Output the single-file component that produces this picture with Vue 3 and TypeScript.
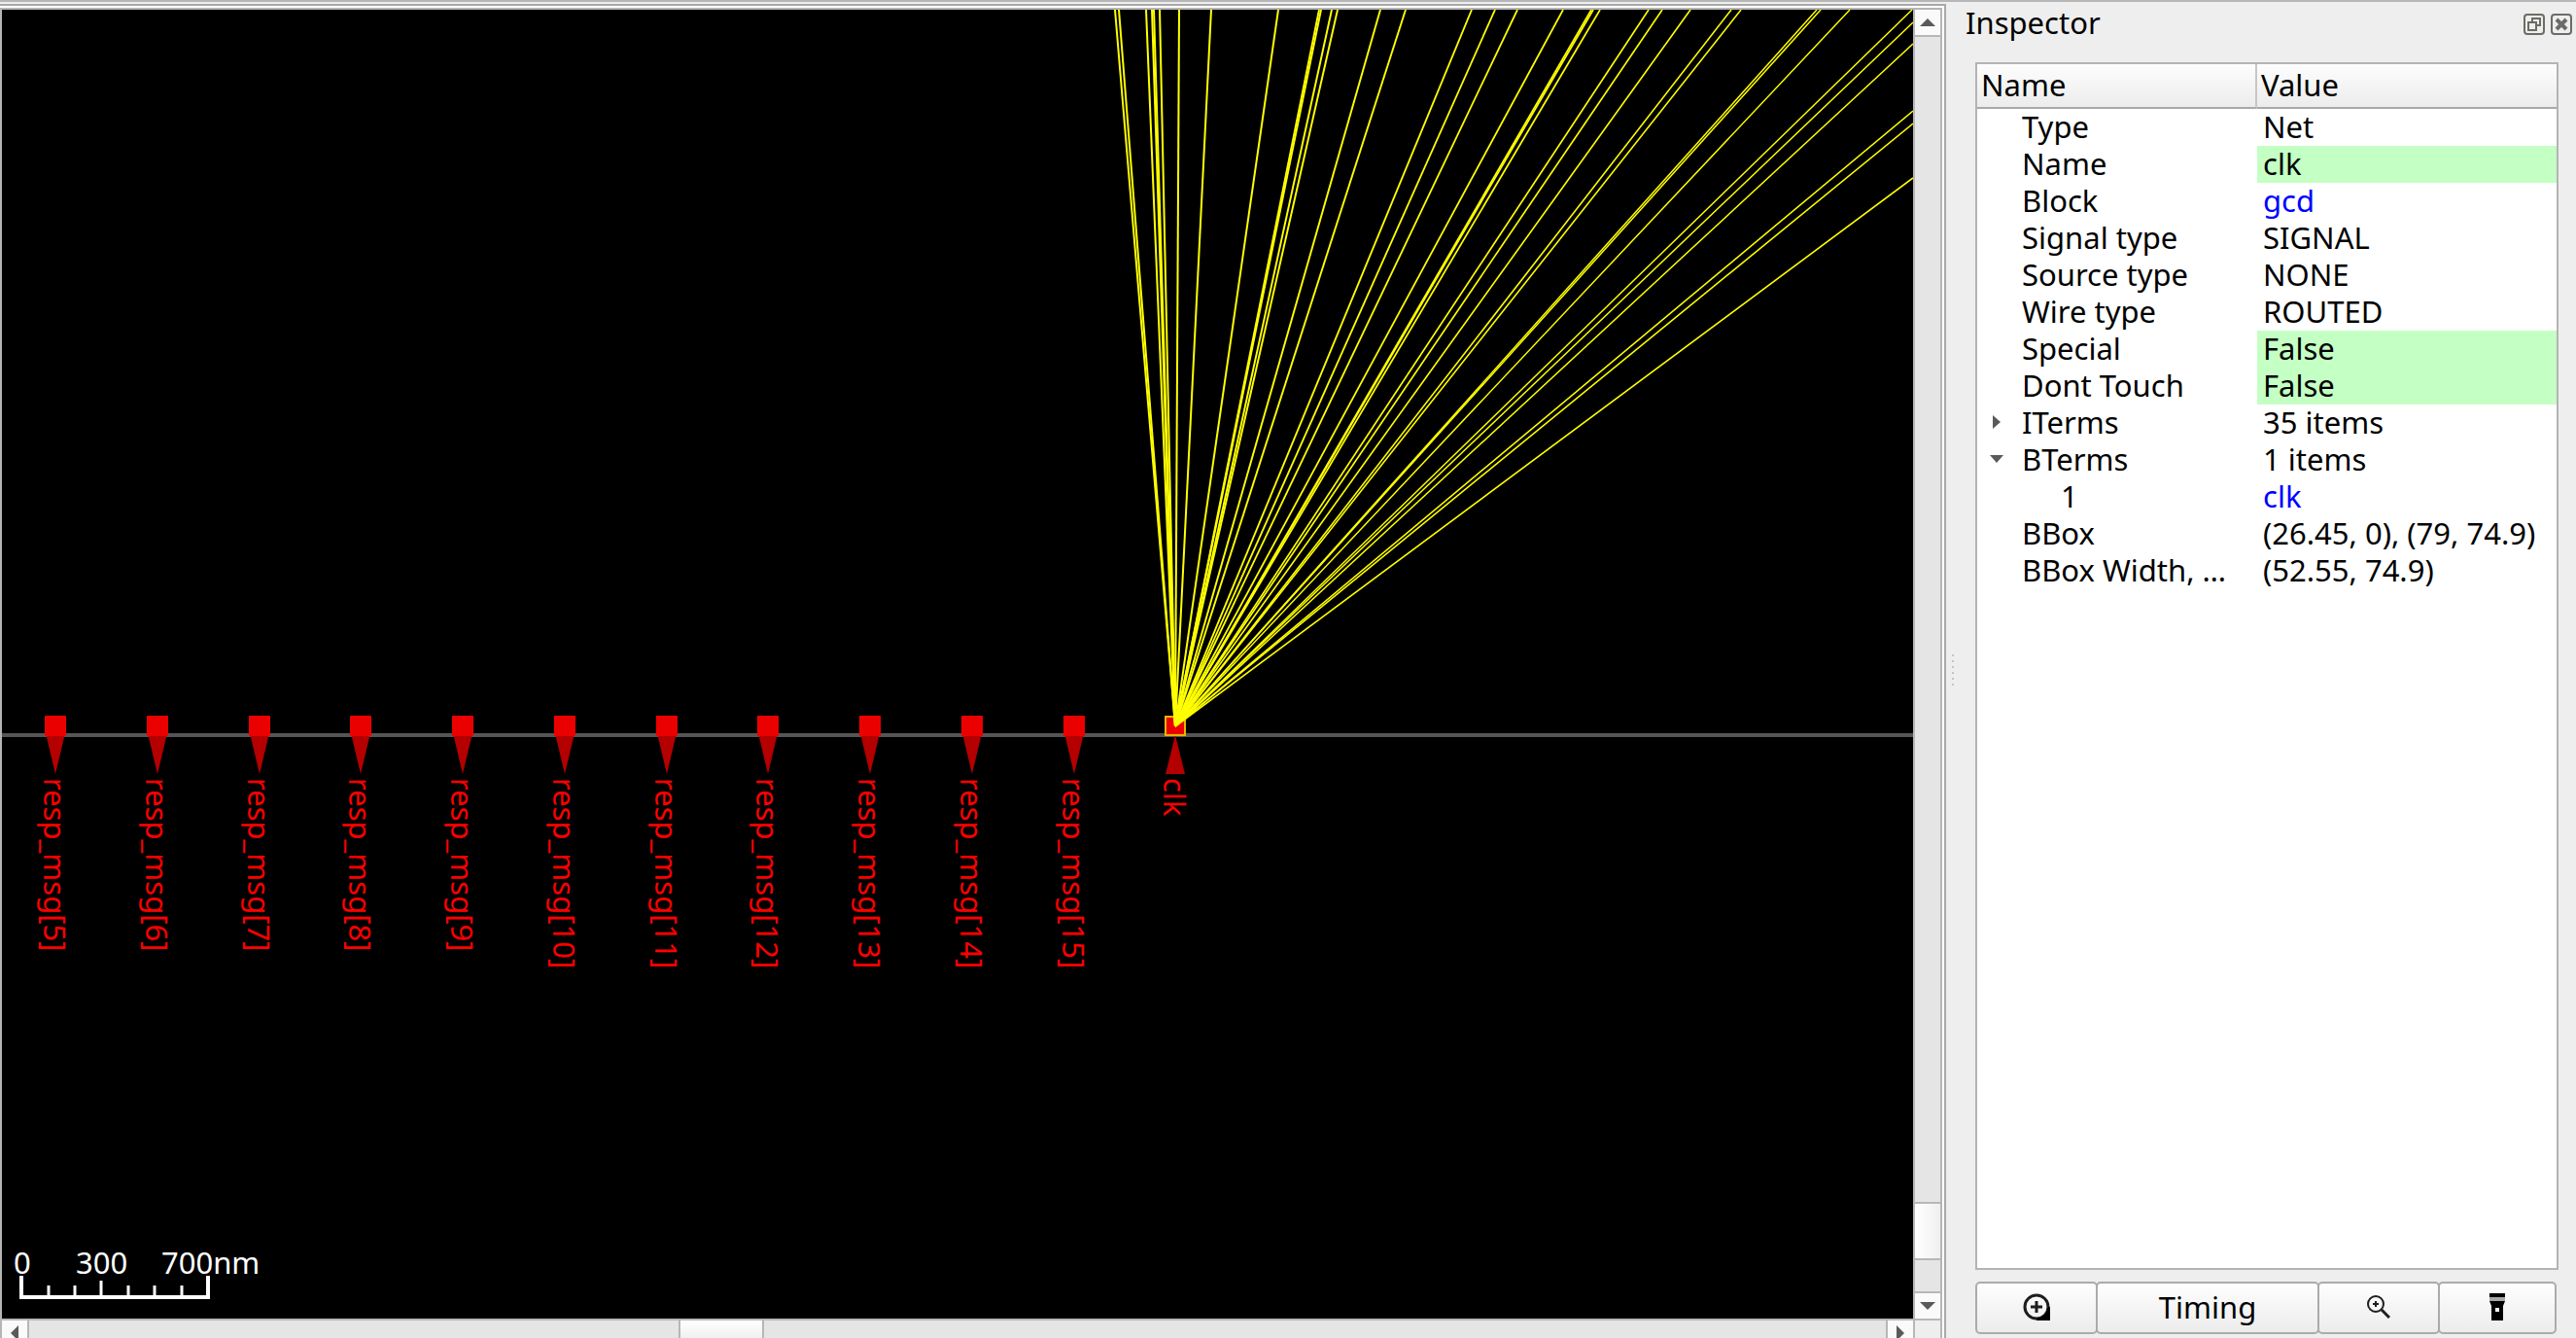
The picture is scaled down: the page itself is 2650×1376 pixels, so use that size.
<script setup lang="ts">
interface Point { x: number; y: number }
interface Pin { label: string; x: number }
interface Row {
  name: string
  value: string
  editable?: boolean
  link?: boolean
  child?: boolean
  state?: 'open' | 'closed'
}

const hub: Point = { x: 1207, y: 737 }
const edgeY = 746

// Flight lines of the selected net: where each leaves the view at the top or at the right.
const topEnds: number[] = [
  1145, 1149, 1177, 1183, 1185, 1191, 1211, 1244, 1313, 1355, 1357, 1368, 1374, 1418, 1444,
  1512, 1536, 1559, 1606, 1635, 1637, 1644, 1694, 1708, 1737, 1779, 1789, 1867, 1871, 1901, 1965,
]
const rightEnds: number[] = [13, 35, 104, 117, 173]
const flightLines: Point[] = [
  ...topEnds.map((x) => ({ x, y: 0 })),
  ...rightEnds.map((y) => ({ x: 1966, y })),
]

// Cosmetic pen: two pixels measured along the minor axis, so diagonals come out thinner.
function penWidth(end: Point): number {
  const dx = Math.abs(end.x - hub.x)
  const dy = Math.abs(end.y - hub.y)
  return (2 * Math.max(dx, dy)) / Math.hypot(dx, dy)
}

const pins: Pin[] = Array.from({ length: 11 }, (_, i) => ({
  label: `resp_msg[${i + 5}]`,
  x: Math.round(55 + i * 104.75),
}))

const ticks: number[] = [48, 75, 130, 157, 185]

const rows: Row[] = [
  { name: 'Type', value: 'Net' },
  { name: 'Name', value: 'clk', editable: true },
  { name: 'Block', value: 'gcd', link: true },
  { name: 'Signal type', value: 'SIGNAL' },
  { name: 'Source type', value: 'NONE' },
  { name: 'Wire type', value: 'ROUTED' },
  { name: 'Special', value: 'False', editable: true },
  { name: 'Dont Touch', value: 'False', editable: true },
  { name: 'ITerms', value: '35 items', state: 'closed' },
  { name: 'BTerms', value: '1 items', state: 'open' },
  { name: '1', value: 'clk', link: true, child: true },
  { name: 'BBox', value: '(26.45, 0), (79, 74.9)' },
  { name: 'BBox Width, …', value: '(52.55, 74.9)' },
]
</script>

<template>
  <div class="app">
    <main class="viewer">
      <div class="frame">
        <div class="canvas">
          <svg class="layout" role="img" aria-label="Layout view">
            <rect class="edge" x="0" :y="edgeY - 2" width="100%" height="4" />
            <g v-for="pin in pins" :key="pin.label" :transform="`translate(${pin.x} ${edgeY})`">
              <path class="marker" d="M-10 -2H10L0 40Z" />
              <rect class="pin" x="-11" y="-20" width="22" height="21" />
              <text transform="translate(-12 44) rotate(90)">{{ pin.label }}</text>
            </g>
            <g :transform="`translate(${hub.x} ${edgeY})`">
              <path class="marker" d="M0 0L10 40H-10Z" />
              <rect class="pin selected" x="-10" y="-19" width="20" height="19" />
              <text transform="translate(-12 44) rotate(90)">clk</text>
            </g>
            <line
              v-for="(end, i) in flightLines"
              :key="i"
              class="flight"
              :x1="hub.x"
              :y1="hub.y"
              :x2="end.x"
              :y2="end.y"
              :stroke-width="penWidth(end)"
            />
          </svg>
          <svg class="scale" width="300" height="80" aria-label="Scale">
            <text x="12" y="34">0</text>
            <text x="76" y="34">300</text>
            <text x="164" y="34">700nm</text>
            <path class="ruler" d="M20 36V58H212V36" />
            <path class="tick" d="M102 41V57" />
            <path v-for="x in ticks" :key="x" class="tick" :d="`M${x} 46V57`" />
          </svg>
        </div>
        <div class="vscroll">
          <button class="arrow" type="button" aria-label="Scroll up">
            <svg width="16" height="8"><path d="M8 0L16 8H0Z" /></svg>
          </button>
          <div class="track before"></div>
          <div class="thumb"></div>
          <div class="track after"></div>
          <button class="arrow" type="button" aria-label="Scroll down">
            <svg width="16" height="8"><path d="M0 0H16L8 8Z" /></svg>
          </button>
        </div>
        <div class="hscroll">
          <button class="arrow" type="button" aria-label="Scroll left">
            <svg width="8" height="16"><path d="M8 0V16L0 8Z" /></svg>
          </button>
          <div class="track before"></div>
          <div class="thumb"></div>
          <div class="track after"></div>
          <button class="arrow" type="button" aria-label="Scroll right">
            <svg width="8" height="16"><path d="M0 0V16L8 8Z" /></svg>
          </button>
        </div>
        <div class="corner"></div>
      </div>
    </main>

    <div class="splitter"></div>

    <aside class="dock">
      <header class="dock-title">
        <h1>Inspector</h1>
        <button class="dock-button" type="button" aria-label="Float">
          <svg width="22" height="22" viewBox="0 0 22 22">
            <rect x="1" y="1" width="20" height="20" rx="3" />
            <path d="M9 8V5H17V12H14M5 9H13V17H5Z" />
          </svg>
        </button>
        <button class="dock-button" type="button" aria-label="Close">
          <svg width="22" height="22" viewBox="0 0 22 22">
            <rect x="1" y="1" width="20" height="20" rx="3" />
            <path class="cross" d="M6 6L16 16M16 6L6 16" />
          </svg>
        </button>
      </header>

      <div class="tree">
        <table>
          <thead>
            <tr>
              <th scope="col" class="name">Name</th>
              <th scope="col">Value</th>
            </tr>
          </thead>
          <tbody>
            <tr v-for="(row, i) in rows" :key="i">
              <td class="name">
                <div class="cell" :class="{ child: row.child }">
                  <span class="branch">
                    <button v-if="row.state" type="button" :aria-label="`Toggle ${row.name}`">
                      <svg v-if="row.state === 'closed'" width="8" height="14"><path d="M0 0V14L8 7Z" /></svg>
                      <svg v-else width="14" height="8"><path d="M0 0H14L7 8Z" /></svg>
                    </button>
                  </span>
                  <span>{{ row.name }}</span>
                </div>
              </td>
              <td class="value" :class="{ editable: row.editable }">
                <a v-if="row.link" href="#">{{ row.value }}</a>
                <template v-else>{{ row.value }}</template>
              </td>
            </tr>
          </tbody>
        </table>
      </div>

      <div class="actions">
        <button class="focus" type="button" aria-label="Zoom to item">
          <svg width="28" height="28" viewBox="0 0 28 28">
            <path class="stroke3" d="M14 2A12 12 0 1 0 14 26A12 12 0 0 0 14 2Z" />
            <path class="solid" d="M28 14V28H14V26L20 24L24 20L26 14Z" />
            <path class="stroke3" d="M14 8V20M8 14H20" />
          </svg>
        </button>
        <button class="timing" type="button">Timing</button>
        <button class="zoom" type="button" aria-label="Zoom in">
          <svg width="24" height="24" viewBox="0 0 24 24">
            <circle class="stroke2" cx="9" cy="9" r="8" />
            <path class="stroke2" d="M9 6V12M6 9H12" />
            <path class="stroke3" d="M15 15L23 23" />
          </svg>
        </button>
        <button class="highlight" type="button" aria-label="Highlight">
          <svg width="16" height="28" viewBox="0 0 16 28">
            <path class="solid" d="M0 0H16V4H0Z" />
            <path class="lens" d="M0 4H16V8H0Z" />
            <path class="solid" fill-rule="evenodd" d="M0 8H16L14 13V28H2V13ZM6 15V19H10V15Z" />
          </svg>
        </button>
      </div>
    </aside>
  </div>
</template>

<style>
html,
body {
  margin: 0;
  background: #eeeeee;
}
</style>

<style scoped>
.app {
  box-sizing: border-box;
  display: flex;
  height: 100vh;
  overflow: hidden;
  border-top: 2px solid #b6b6b6;
  padding-top: 2px;
  background: #eeeeee;
  color: #000000;
  font-family: "Noto Sans", "Open Sans", sans-serif;
  font-size: 31px;
}

button {
  box-sizing: border-box;
  margin: 0;
  padding: 0;
  border: 0;
  background: none;
  color: inherit;
  font: inherit;
}

svg {
  display: block;
}

.viewer {
  box-sizing: border-box;
  flex: 1;
  min-width: 0;
  padding: 2px 2px 0 0;
  border: solid #a9a9a9;
  border-width: 2px 2px 0 0;
  background: #ffffff;
}

.frame {
  box-sizing: border-box;
  display: grid;
  grid-template: minmax(0, 1fr) 20px / minmax(0, 1fr) 28px;
  height: 100%;
  border: solid #b5b5b5;
  border-width: 2px 2px 0 2px;
}

.canvas {
  position: relative;
  overflow: hidden;
  background: #000000;
}

.layout {
  width: 100%;
  height: 100%;
}

.layout text {
  fill: #ff0000;
}

.edge {
  fill: #555555;
}

.marker {
  fill: #b40000;
}

.pin {
  fill: #eb0000;
}

.selected {
  stroke: #e8b400;
  stroke-width: 2px;
}

.flight {
  stroke: #ffff00;
}

.scale {
  position: absolute;
  bottom: 0;
  left: 0;
  fill: #ffffff;
}

.ruler,
.tick {
  fill: none;
  stroke: #ffffff;
  stroke-width: 4px;
}

.tick {
  stroke-width: 3px;
}

.vscroll,
.hscroll {
  display: flex;
  overflow: hidden;
  background: #e5e5e5;
}

.vscroll {
  flex-direction: column;
  border-left: 2px solid #b7b7b7;
}

.hscroll {
  border-top: 2px solid #b7b7b7;
}

.arrow {
  display: flex;
  flex: 0 0 26px;
  height: 26px;
  align-items: center;
  justify-content: center;
  background: #fafafa;
  fill: #5a5a5a;
}

.vscroll .arrow {
  flex-basis: 28px;
}

.vscroll .arrow:first-child {
  border-bottom: 2px solid #b7b7b7;
}

.vscroll .arrow:last-child {
  border-top: 2px solid #b7b7b7;
}

.hscroll .arrow {
  box-sizing: content-box;
}

.hscroll .arrow:first-child {
  border-right: 2px solid #b7b7b7;
}

.hscroll .arrow:last-child {
  border-left: 2px solid #b7b7b7;
}

.vscroll .before {
  flex: 1198;
}

.vscroll .after {
  flex: 32;
}

.hscroll .before {
  flex: 668;
}

.hscroll .after {
  flex: 1154;
}

.thumb {
  box-sizing: border-box;
  border: solid #b7b7b7;
}

.vscroll .thumb {
  flex: 0 0 60px;
  border-width: 2px 0;
  background: linear-gradient(90deg, #ffffff, #f0f0f0);
}

.hscroll .thumb {
  flex: 0 0 88px;
  border-width: 0 2px;
  background: linear-gradient(#ffffff, #f0f0f0);
}

.corner {
  border: solid #b7b7b7;
  border-width: 2px 0 0 2px;
  background: #eeeeee;
}

.splitter {
  display: flex;
  flex: 0 0 14px;
  align-items: center;
  justify-content: center;
}

.splitter::before {
  width: 2px;
  height: 34px;
  background: repeating-linear-gradient(#c4c4c4 0 2px, transparent 2px 6px);
  content: "";
}

.dock {
  box-sizing: border-box;
  display: flex;
  flex: 0 0 634px;
  flex-direction: column;
  padding: 0 18px 4px 16px;
}

.dock-title {
  display: flex;
  height: 60px;
  align-items: flex-start;
  gap: 6px;
  margin: 0 -14px 0 -10px;
}

h1 {
  flex: 1;
  margin: 0;
  font: inherit;
  line-height: 38px;
}

.dock-button {
  margin-top: 10px;
}

.dock-button svg {
  fill: none;
  stroke: #6c6c66;
  stroke-width: 2px;
}

.dock-button .cross {
  stroke-width: 4px;
}

.tree {
  flex: 1;
  min-height: 0;
  border: 2px solid #b4b4b4;
  background: #ffffff;
}

table {
  width: 100%;
  table-layout: fixed;
  border-collapse: separate;
  border-spacing: 0;
}

th {
  height: 44px;
  padding: 0 0 0 4px;
  border-bottom: 2px solid #a9a9a9;
  background: linear-gradient(#fdfdfd, #ececec);
  font-weight: 400;
  line-height: 42px;
  text-align: left;
  vertical-align: top;
}

th.name {
  box-sizing: border-box;
  width: 288px;
  border-right: 2px solid #c6c6c6;
}

td {
  height: 38px;
  padding: 0;
  line-height: 36px;
  vertical-align: top;
  white-space: nowrap;
}

.cell {
  display: flex;
}

.child {
  padding-left: 40px;
}

.branch {
  display: flex;
  flex: 0 0 46px;
  align-items: center;
  justify-content: center;
}

.branch button {
  margin-right: 6px;
  fill: #5a5a5a;
}

.value {
  padding-left: 6px;
}

.editable {
  background: #c4ffc4;
}

a {
  color: #0000ff;
  text-decoration: none;
}

.actions {
  display: flex;
  height: 54px;
  margin: 12px 2px 0 0;
}

.actions button {
  display: flex;
  align-items: center;
  justify-content: center;
  margin-right: -2px;
  padding-bottom: 2px;
  border: 2px solid #ababab;
  border-radius: 5px;
  background: linear-gradient(#fefefe, #ececec);
}

.actions button:last-child {
  margin-right: 0;
}

.focus,
.zoom {
  flex: 1 1 126px;
}

.timing {
  flex: 2 1 230px;
}

.highlight {
  flex: 1 1 122px;
}

.stroke2,
.stroke3 {
  fill: none;
  stroke: #1e1e1e;
  stroke-width: 2px;
}

.stroke3 {
  stroke-width: 3px;
}

.solid {
  fill: #000000;
}

.lens {
  fill: #a8a8a8;
}
</style>
